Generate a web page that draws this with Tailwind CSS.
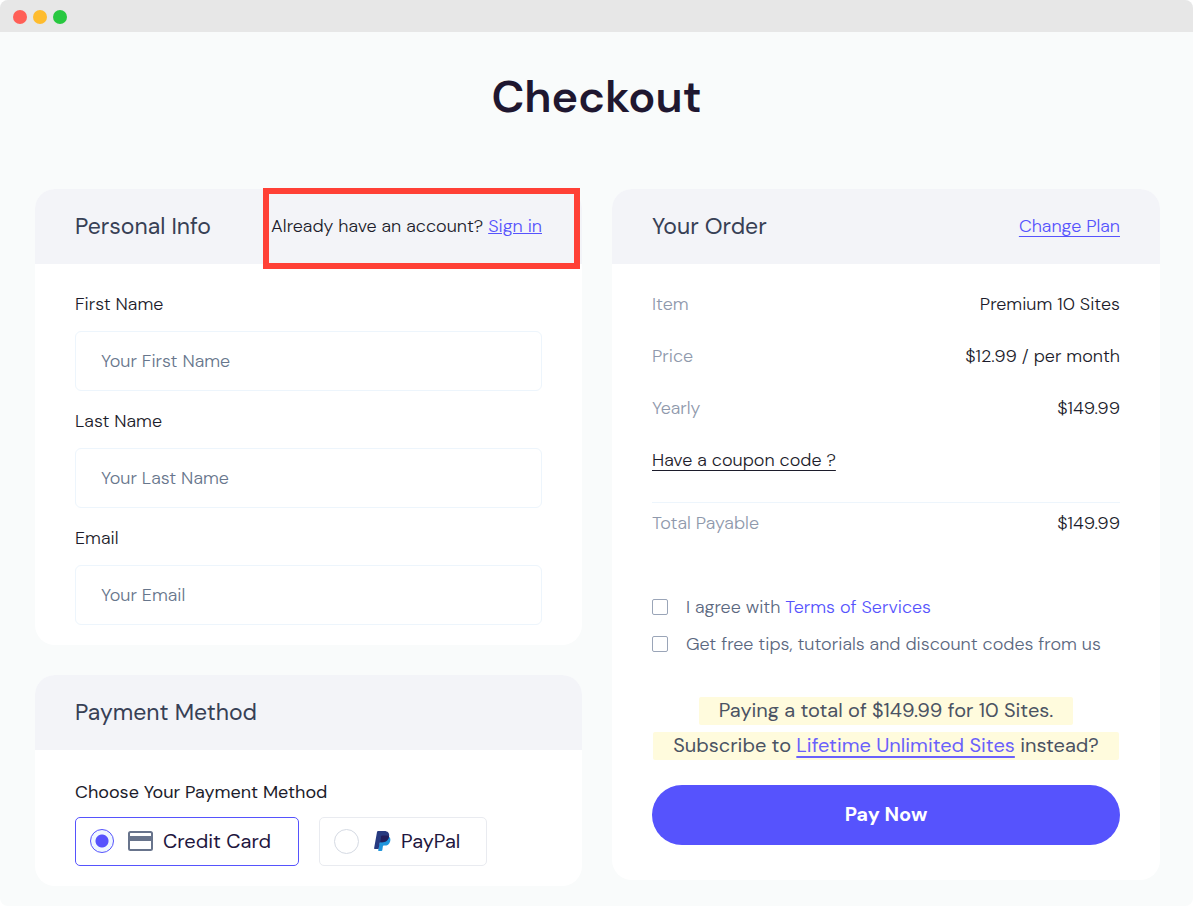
<!DOCTYPE html>
<html lang="en">
<head>
    <meta charset="UTF-8">
    <meta name="viewport" content="width=device-width, initial-scale=1.0">
    <title>Checkout</title>
    <script src="https://cdn.jsdelivr.net/npm/@tailwindcss/browser@4"></script>
</head>
<body class="bg-white">
    <div class="min-h-screen overflow-hidden rounded-lg bg-[#f9fbfb] font-['DM_Sans',Inter,sans-serif] text-[18px] font-light text-[#1c1c2b]">
        <!-- window bar -->
        <div class="flex h-8 items-center gap-[6px] bg-[#e7e7e7] px-[13px] pt-[2px]">
            <span class="size-[14px] rounded-full bg-[#ff5f57]"></span>
            <span class="size-[14px] rounded-full bg-[#febc2e]"></span>
            <span class="size-[14px] rounded-full bg-[#28c840]"></span>
        </div>

        <h1 class="pt-8 text-center text-[45px] leading-[66px] font-semibold text-[#1f1730]">Checkout</h1>

        <main class="grid grid-cols-[547fr_548fr] items-start gap-[30px] pt-[59px] pr-[33px] pb-5 pl-[35px]">
            <div class="flex flex-col gap-[30px]">
                <section class="relative rounded-[20px] bg-white">
                    <div class="flex h-[75px] items-center justify-between rounded-t-[20px] bg-[#f3f4f8] px-10">
                        <h2 class="text-[23px] font-normal text-[#374055]">Personal Info</h2>
                        <p>Already have an account? <a href="#" class="text-[#5653fd] underline">Sign in</a></p>
                    </div>
                    <div class="absolute -top-px right-[2px] h-[81px] w-[317px] border-6 border-[#ff4036]"></div>
                    <form class="flex flex-col gap-[17px] px-10 pt-[27px] pb-5">
                        <div>
                            <label for="first" class="mb-[13px] block leading-[27px]">First Name</label>
                            <input type="text" id="first" placeholder="Your First Name" class="h-[60px] w-full rounded-md border border-[#edf5fc] px-[25px] placeholder:text-[#67768c]">
                        </div>
                        <div>
                            <label for="last" class="mb-[13px] block leading-[27px]">Last Name</label>
                            <input type="text" id="last" placeholder="Your Last Name" class="h-[60px] w-full rounded-md border border-[#edf5fc] px-[25px] placeholder:text-[#67768c]">
                        </div>
                        <div>
                            <label for="email" class="mb-[13px] block leading-[27px]">Email</label>
                            <input type="email" id="email" placeholder="Your Email" class="h-[60px] w-full rounded-md border border-[#edf5fc] px-[25px] placeholder:text-[#67768c]">
                        </div>
                    </form>
                </section>

                <section class="rounded-[20px] bg-white">
                    <div class="flex h-[75px] items-center rounded-t-[20px] bg-[#f3f4f8] px-10">
                        <h2 class="text-[23px] font-normal text-[#374055]">Payment Method</h2>
                    </div>
                    <div class="px-10 pt-[29px] pb-5">
                        <p class="mb-[11px] leading-[27px] font-normal">Choose Your Payment Method</p>
                        <div class="flex gap-5">
                            <label class="flex h-[49px] w-56 items-center rounded-[5px] border border-[#5653fd] pb-px pl-[14px] text-[20px] font-normal text-[#1f1740]">
                                <input type="radio" name="method" checked class="mr-[14px] size-6 appearance-none rounded-full border border-[#5653fd] bg-[#eff7ff] bg-[radial-gradient(circle,#5653fd_6px,transparent_7px)]">
                                <svg class="mr-[10px] h-5 w-[25px]" viewBox="0 0 25 20" fill="none">
                                    <rect x="1" y="1" width="23" height="18" rx="1.500" stroke="#68748c" stroke-width="2"/>
                                    <path d="M1 5h23v5H1z" fill="#68748c"/>
                                </svg>
                                Credit Card
                            </label>
                            <label class="flex h-[49px] w-42 items-center rounded-[5px] border border-[#e9ebf0] pb-px pl-[14px] text-[20px] font-normal text-[#1f1740]">
                                <input type="radio" name="method" class="mr-[15px] size-[25px] appearance-none rounded-full border border-[#d5dae3]">
                                <svg class="mr-[10px] h-5 w-[17px]" viewBox="0 0 17 20">
                                    <path d="M14.5 5.5c1.9 1 2.2 2.700 1.700 4.700-.8 3.200-2.900 4.400-5.700 4.400h-.8c-.4 0-.7.3-.8.700l-.6 3.900c-.1.500-.4.800-.9.800H4.700c-.4 0-.6-.3-.5-.7L6 8z" fill="#1f95dc"/>
                                    <path d="M3 1c.1-.6.500-1 1.100-1h6.100c3.600 0 5.500 2.100 4.900 5.400-.7 4-3.300 5.900-6.900 5.900H6.500c-.5 0-.8.300-.9.800l-.9 5.400c0 .3-.2.500-.5.500H.7c-.4 0-.7-.3-.6-.7z" fill="#273a80"/>
                                    <path d="M7.200 5.300c.1-.5.400-.8.900-.8h4.400c1 0 1.800.2 2.500.6-.5 4.300-3.200 6.200-6.800 6.200H6.300z" fill="#221f5c"/>
                                </svg>
                                PayPal
                            </label>
                        </div>
                    </div>
                </section>
            </div>

            <section class="rounded-[20px] bg-white">
                <div class="flex h-[75px] items-center justify-between rounded-t-[20px] bg-[#f3f4f8] px-10">
                    <h2 class="text-[23px] font-normal text-[#374055]">Your Order</h2>
                    <a href="#" class="text-[#5653fd] underline underline-offset-4">Change Plan</a>
                </div>
                <div class="px-10 pt-[14px] pb-[35px]">
                    <table class="w-full">
                        <tbody>
                            <tr class="h-[52px]">
                                <th class="text-left font-light text-[#8f99ac]">Item</th>
                                <td class="text-right">Premium 10 Sites</td>
                            </tr>
                            <tr class="h-[52px]">
                                <th class="text-left font-light text-[#8f99ac]">Price</th>
                                <td class="text-right">$12.99 / per month</td>
                            </tr>
                            <tr class="h-[52px]">
                                <th class="text-left font-light text-[#8f99ac]">Yearly</th>
                                <td class="text-right">$149.99</td>
                            </tr>
                            <tr class="h-[68px] border-b border-[#edf5fc]">
                                <td colspan="2" class="pt-4 pb-8 leading-5"><a href="#" class="underline underline-offset-4">Have a coupon code ?</a></td>
                            </tr>
                            <tr class="h-[42px]">
                                <th class="text-left font-light text-[#8f99ac]">Total Payable</th>
                                <td class="text-right">$149.99</td>
                            </tr>
                        </tbody>
                    </table>

                    <div class="mt-[49px] flex flex-col gap-[10px] leading-[27px] text-[#5b6880]">
                        <div class="flex items-center">
                            <input type="checkbox" id="terms" class="mr-[18px] size-4 appearance-none rounded-[2px] border border-[#9aa5b8]">
                            <label for="terms">I agree with <a href="#" class="text-[#5653fd]">Terms of Services</a></label>
                        </div>
                        <div class="flex items-center">
                            <input type="checkbox" id="tips" class="mr-[18px] size-4 appearance-none rounded-[2px] border border-[#9aa5b8]">
                            <label for="tips">Get free tips, tutorials and discount codes from us</label>
                        </div>
                    </div>

                    <div class="mt-[39px] flex flex-col items-center gap-[7px] text-[20px] leading-[26px] font-normal whitespace-nowrap text-[#4b5363]">
                        <p class="rounded-xs bg-[#fffbdd] px-5 pb-[2px]">Paying a total of $149.99 for 10 Sites.</p>
                        <p class="rounded-xs bg-[#fffbdd] px-5 pb-[2px]">Subscribe to <a href="#" class="text-[#6a61fb] underline decoration-2 underline-offset-4">Lifetime Unlimited Sites</a> instead?</p>
                    </div>

                    <button type="button" class="mt-[25px] h-[60px] w-full rounded-full bg-[#5653fd] pb-[2px] text-[20px] font-bold text-white">Pay Now</button>
                </div>
            </section>
        </main>
    </div>
</body>
</html>
